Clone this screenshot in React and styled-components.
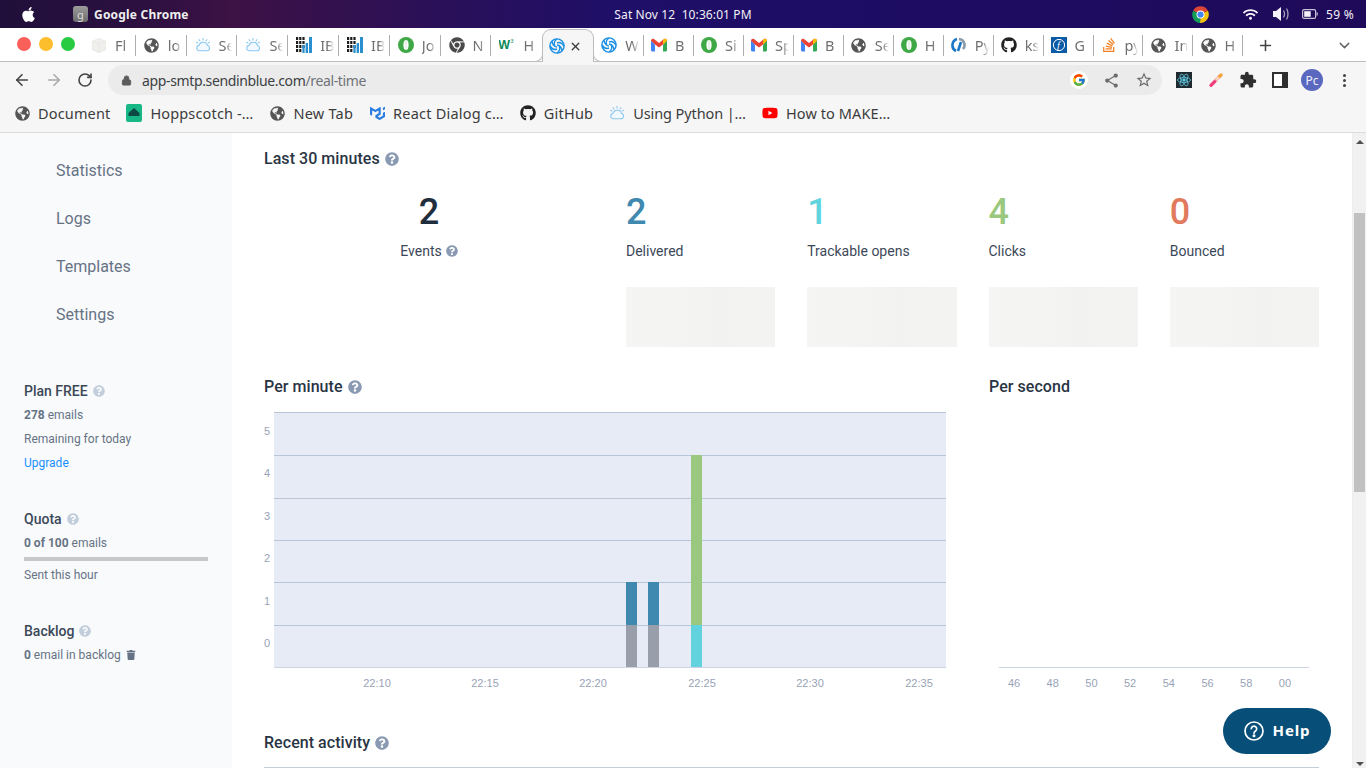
import React from 'react';
import styled, { createGlobalStyle } from 'styled-components';
import { FaApple, FaGlobeAmericas, FaGithub, FaChrome, FaStackOverflow, FaYoutube, FaWifi, FaTrash, FaQuestionCircle } from 'react-icons/fa';
import { FcGoogle } from 'react-icons/fc';
import { SiMui } from 'react-icons/si';
import { MdExtension, MdShare, MdStarBorder } from 'react-icons/md';
import { ArrowLeft, ArrowRight, RotateCw, Lock, Plus, ChevronDown, X } from 'lucide-react';

const Global = createGlobalStyle`
  html, body { margin: 0; padding: 0; height: 100%; overflow: hidden; background: #fff; }
  * { box-sizing: border-box; }
  body { font-family: Roboto, "Liberation Sans", sans-serif; }
`;
const UI = '"Noto Sans", "Open Sans", sans-serif';

const Screen = styled.div`
  position: relative; width: 1366px; height: 768px; display: flex; flex-direction: column; overflow: hidden;
`;
const Desktop = styled.div`
  height: 28px; flex: none; display: grid; grid-template-columns: 1fr auto 1fr; align-items: center;
  background: linear-gradient(90deg, #200f3a 0%, #2b1040 10%, #3d1245 17%, #2a1058 32%, #1f0f68 45%, #1d0c62 70%, #1e0a58 100%);
  color: #f2f0f6; font-family: ${UI}; font-size: 12px; letter-spacing: .1px;
`;
const DeskLeft = styled.div`display: flex; align-items: center; padding-left: 20px; font-weight: 700; font-size: 12px; color: #eee; letter-spacing: .2px;`;
const AppGlyph = styled.span`
  width: 15px; height: 16px; border-radius: 3px; background: linear-gradient(#9c9c9c,#6c6c6c); margin-left: 36px; margin-right: 6px;
  display: flex; align-items: center; justify-content: center; color: #ddd; font-size: 11px; font-weight: 400;
`;
const DeskRight = styled.div`display: flex; align-items: center; justify-content: flex-end; padding-right: 12px;`;
const Percent = styled.span`margin-left: 8px; font-size: 12px; letter-spacing: .3px;`;
const TrayGap = styled.span`display: flex; margin-left: ${p => p.$m}px;`;

const TabStrip = styled.div`
  height: 34px; flex: none; background: #fff; border-bottom: 1px solid #bdbdbd; display: flex; align-items: stretch; position: relative;
`;
const Lights = styled.div`display: flex; align-items: center; gap: 8px; width: 85px; padding-left: 17px; flex: none; margin-top: -2px;`;
const Light = styled.span`width: 14px; height: 14px; border-radius: 50%; background: ${p => p.$c};`;
const Tab = styled.div`
  width: ${p => p.$w}px; flex: none; display: flex; align-items: center; position: relative; padding-left: ${p => p.$pl}px; gap: 8px; margin-top: 1px;
  font-family: ${UI}; font-size: 14.5px; color: #707070;
  &::after { content: ''; position: absolute; right: 0; top: 6px; height: 21px; width: 1px; background: ${p => p.$noSep ? 'transparent' : '#aeaeae'}; }
`;
const ActiveTab = styled.div`
  width: 52px; flex: none; display: flex; align-items: center; position: relative; padding-left: 6px; gap: 4px;
  margin-top: 1px; margin-bottom: -1px; background: #f6f6f6; border: 1px solid #bdbdbd; border-bottom: 0; border-radius: 9px 9px 0 0;
  &::before, &::after { content: ''; position: absolute; bottom: 0; width: 8px; height: 8px; background: #fff; }
  &::before { left: -9px; border-right: 1px solid #bdbdbd; border-bottom: 1px solid #bdbdbd; border-bottom-right-radius: 8px; }
  &::after { right: -9px; border-left: 1px solid #bdbdbd; border-bottom: 1px solid #bdbdbd; border-bottom-left-radius: 8px; }
`;
const TabLabel = styled.span`
  flex: 1; min-width: 0; overflow: hidden; white-space: nowrap; margin-right: 5px;
  -webkit-mask-image: linear-gradient(90deg, #000 55%, transparent 100%); mask-image: linear-gradient(90deg, #000 55%, transparent 100%);
`;
const IconBox = styled.span`width: 16px; height: 16px; flex: none; display: flex; align-items: center; justify-content: center;`;
const TabTail = styled.div`display: flex; align-items: center; flex: 1; position: relative; margin-top: 1px;`;
const PlusBtn = styled.span`display: flex; margin-left: 14px; color: #444;`;
const ChevBtn = styled.span`display: flex; position: absolute; left: 93px; color: #666;`;

const Toolbar = styled.div`height: 36px; flex: none; background: #f6f6f6; display: flex; align-items: center; padding-left: 13px;`;
const NavBtn = styled.span`width: 32px; display: flex; color: ${p => p.$c || '#444'};`;
const Omnibox = styled.div`
  width: 1054px; height: 30px; margin-left: -1px; border-radius: 15px; background: #ebebeb; display: flex; align-items: center; padding-left: 13px;
  font-family: ${UI}; font-size: 14px; position: relative;
`;
const Url = styled.span`color: #3c4043; margin-left: 10px; letter-spacing: -.36px;`;
const UrlPath = styled.span`color: #6f7377;`;
const OmniIcons = styled.div`position: absolute; right: 9px; display: flex; align-items: center; gap: 15px; color: #6c6c6c;`;
const GoogleDot = styled.span`width: 18px; height: 18px; border-radius: 50%; background: #fff; display: flex; align-items: center; justify-content: center;`;
const ExtRow = styled.div`display: flex; align-items: center; margin-left: 6px;`;
const ExtSlot = styled.span`width: 32px; display: flex; justify-content: center; align-items: center; color: #2f2f2f;`;
const Avatar = styled.span`
  width: 22px; height: 22px; border-radius: 50%; background: #5a68bf; color: #f0f0fa; display: flex; align-items: center; justify-content: center;
  font-family: ${UI}; font-size: 12px;
`;
const Kebab = styled.span`
  width: 3px; height: 3px; border-radius: 50%; background: #444; box-shadow: 0 -5px 0 #444, 0 5px 0 #444;
`;

const Bookmarks = styled.div`
  height: 35px; flex: none; background: #f6f6f6; border-bottom: 1px solid #dcdcdc; display: flex; align-items: center; padding: 0 0 4px 14px; gap: 16px;
  font-family: ${UI}; font-size: 14.5px; color: #3c3c3c;
`;
const Mark = styled.div`display: flex; align-items: center; gap: 8px; white-space: nowrap; color: #3c3c3c; letter-spacing: ${p => p.$ls}px;`;

const Body = styled.div`flex: 1; min-height: 0; display: flex; overflow: hidden; position: relative;`;
const Sidebar = styled.aside`width: 232px; flex: none; background: #f9fafc; padding-top: 13px;`;
const NavItem = styled.div`height: 48px; display: flex; align-items: center; padding-left: 56px; font-size: 16px; color: #667385;`;
const SideGroup = styled.div`padding-left: 24px; margin-top: ${p => p.$m}px;`;
const SideTitle = styled.div`font-size: 14px; font-weight: 500; color: #3c4858; line-height: 24px; display: flex; align-items: center; gap: 5px;`;
const SideLine = styled.div`font-size: 12px; color: ${p => p.$c || '#667385'}; line-height: 24px; display: flex; align-items: center; gap: 5px;`;
const SideStrong = styled.b`font-weight: 700;`;
const Progress = styled.div`width: 184px; height: 4px; background: #c6c8ca; margin-top: 2px; margin-bottom: 2px;`;

const Main = styled.main`flex: 1; min-width: 0; padding: 14px 33px 0 32px; position: relative;`;
const Heading = styled.h2`
  margin: ${p => p.$m || 0}px 0 0; font-size: 16px; font-weight: 500; line-height: 24px; color: #2a3544; display: flex; align-items: center; gap: 5px; letter-spacing: .05px;
`;
const StatsGrid = styled.div`display: grid; grid-template-columns: 330px repeat(4, 149.25px); column-gap: 32px; margin-top: 21px;`;
const Stat = styled.div`display: flex; flex-direction: column; align-items: ${p => p.$center ? 'center' : 'flex-start'};`;
const StatValue = styled.div`font-size: 36px; font-weight: 500; line-height: 40px; color: ${p => p.$c};`;
const StatLabel = styled.div`font-size: 14px; line-height: 20px; color: #3c4858; margin-top: 9px; display: flex; align-items: center; gap: 4px;`;
const Spark = styled.div`
  width: 100%; height: 60px; margin-top: 26px;
  background: linear-gradient(90deg, #f5f5f3, #f4f4f3 30%, #f2f2f1 60%, #f3f3f2);
`;
const ChartRow = styled.div`display: flex; margin-top: 28px;`;
const ChartCol = styled.div`width: ${p => p.$w}px; margin-right: ${p => p.$mr || 0}px; flex: none;`;
const ChartSvg = styled.svg`display: block; margin-top: 6px;`;
const TableTop = styled.div`height: 1px; background: #c5cdd8; margin-top: 12px;`;

const Scrollbar = styled.div`width: 14px; flex: none; background: #f1f1f1; position: relative; border-left: 1px solid #ededed;`;
const Thumb = styled.div`position: absolute; left: 1px; right: 1px; top: 80px; height: 279px; background: #c1c1c1;`;
const ScrollArrow = styled.div`
  position: absolute; left: 3px; width: 0; height: 0; border-left: 4px solid transparent; border-right: 4px solid transparent;
  ${p => p.$up ? 'top: 7px; border-bottom: 4px solid #505050;' : 'bottom: 2px; border-top: 4px solid #505050;'}
`;
const HelpBtn = styled.button`
  position: absolute; left: 1223px; top: 708px; width: 108px; height: 46px; border: 0; border-radius: 23px; background: #074e78; color: #fff;
  display: flex; align-items: center; justify-content: center; gap: 9px; font-family: ${UI}; font-weight: 700; font-size: 15px; letter-spacing: .9px; padding: 0;
`;
const HelpText = styled.span`margin-top: -2px;`;

const Hint = ({ size = 14, c = '#8a9ab2' }) => <FaQuestionCircle size={size} color={c} />;

const Cloud = () => (
  <svg width="18" height="16" viewBox="0 0 18 16" fill="none" stroke="#8cc8f0" strokeWidth="1.2">
    <path d="M4.500 14.500h9a3 3 0 0 0 .6-5.900 5 5 0 0 0-9.600-.2 3.100 3.100 0 0 0 0 6.100z" fill="#f3faff" />
    <path d="M9 .5v2M4.600 2l1 1.600M13.400 2l-1 1.600M1.800 5l1.500.8M16.200 5l-1.500.8" strokeLinecap="round" />
  </svg>
);
const Ibm = () => (
  <svg width="16" height="16" viewBox="0 0 16 16">
    {[0, 1, 2, 3].flatMap(r => [0, 1, 2].map(c => (r + c < 5 ? <rect key={`${r}${c}`} x={c * 3.2} y={r * 4} width="2.200" height="3" fill="#1c1c1c" /> : null)))}
    <rect x="9.600" y="6" width="2.400" height="10" fill="#2a8fcf" />
    <rect x="13" y="0" width="3" height="16" fill="#2a8fcf" />
    <rect x="6.400" y="8" width="2.200" height="8" fill="#2a8fcf" />
  </svg>
);
const Mongo = () => (
  <svg width="16" height="16" viewBox="0 0 16 16">
    <circle cx="8" cy="8" r="8" fill="#3fa846" />
    <ellipse cx="8" cy="8" rx="2.600" ry="5" fill="#fff" />
    <path d="M8 3v10" stroke="#bfe3c0" strokeWidth=".8" />
  </svg>
);
const Swirl = () => (
  <svg width="16" height="16" viewBox="0 0 16 16" fill="none" stroke="#1a8fe3" strokeWidth="1.400">
    <circle cx="8" cy="8" r="7.100" />
    <path d="M8 1C5 3 4.500 6 6 8M15 8c-2-3-5-4-7-3M13 13c0-3-2-6-5-6M8 15c3-2 3.500-5 2-7M1 8c2 3 5 4 7 3M3 3c0 3 2 6 5 6" />
  </svg>
);
const Gmail = () => (
  <svg width="16" height="14" viewBox="0 0 16 13">
    <path d="M0 2v9.800C0 12.500.5 13 1.200 13H4V6z" fill="#4285f4" />
    <path d="M16 2v9.800c0 .7-.5 1.200-1.200 1.200H12V6z" fill="#34a853" />
    <path d="M0 2.200C0 .6 1.800-.4 3 .6L8 4.400 13 .6c1.200-1 3 0 3 1.600L12 6 8 9 4 6z" fill="#ea4335" />
    <path d="M12 1.400 13 .6c1.200-1 3 0 3 1.600L12 6z" fill="#fbbc04" />
  </svg>
);
const W3 = () => (
  <svg width="18" height="16" viewBox="0 0 18 16">
    <text x="-1" y="13" fontFamily="Liberation Sans" fontWeight="700" fontSize="14" fill="#0f8a58">W</text>
    <text x="13" y="6" fontFamily="Liberation Sans" fontSize="6" fill="#0f8a58">3</text>
  </svg>
);
const Ring = () => (
  <svg width="16" height="16" viewBox="0 0 16 16" fill="none" strokeWidth="2.600">
    <path d="M5 14A6.500 6.500 0 0 1 6 2" stroke="#1c78c6" />
    <path d="M8 2A6 6 0 0 1 12 12" stroke="#8a9aa8" />
    <path d="M10 5 7 14" stroke="#1c78c6" />
  </svg>
);
const FBox = () => (
  <svg width="16" height="16" viewBox="0 0 16 16">
    <rect width="16" height="16" fill="#0b5aa5" />
    <circle cx="8" cy="8" r="5.600" fill="none" stroke="#fff" />
    <text x="6" y="11.500" fontFamily="Liberation Serif" fontStyle="italic" fontSize="10" fill="#fff">f</text>
  </svg>
);
const Box = () => (
  <svg width="17" height="17" viewBox="0 0 17 17" fill="#f0efed" stroke="#e6e5e2" strokeWidth=".8">
    <path d="M8.500 1 15.500 4v9l-7 3.200L1.500 13V4z" />
    <path d="M1.500 4l7 3 7-3M8.500 7v9" fill="none" />
  </svg>
);
const Hopp = () => (
  <svg width="16" height="18" viewBox="0 0 16 18">
    <rect width="16" height="18" rx="2" fill="#17b886" />
    <path d="M2.500 9 8 4l5.500 5v3h-11z" fill="#0c4a46" />
  </svg>
);
const ChromeColor = () => (
  <svg width="17" height="17" viewBox="0 0 17 17">
    <path d="M8.500 8.500 1.100 4.700A8.400 8.400 0 0 1 15.900 4.700z" fill="#db4437" />
    <path d="M8.500 8.500 15.900 4.700A8.400 8.400 0 0 1 8 16.900z" fill="#f4c20d" />
    <path d="M8.500 8.500 8 16.900A8.400 8.400 0 0 1 1.100 4.700z" fill="#0f9d58" />
    <circle cx="8.500" cy="8.500" r="4" fill="#fff" />
    <circle cx="8.500" cy="8.500" r="3.100" fill="#4285f4" />
  </svg>
);
const Volume = () => (
  <svg width="16" height="14" viewBox="0 0 16 14" fill="#f4f2f8">
    <path d="M0 4h3l5-4v14l-5-4H0z" />
    <path d="M10.500 3.500c1.200 2 1.200 5 0 7M13.500 1.500c2 3 2 8 0 11" fill="none" stroke="#a8a4bc" strokeWidth="1.300" />
  </svg>
);
const Battery = () => (
  <svg width="16" height="10" viewBox="0 0 16 10">
    <rect x=".6" y=".6" width="13" height="8.800" rx="1.500" fill="none" stroke="#c8c4d6" strokeWidth="1.200" />
    <rect x="2.200" y="2.200" width="6.500" height="5.600" fill="#f4f2f8" />
    <rect x="14.500" y="3.500" width="1.200" height="3" fill="#c8c4d6" />
  </svg>
);
const ReactExt = () => (
  <svg width="16" height="16" viewBox="0 0 16 16" fill="none" stroke="#5fc6e0" strokeWidth=".8">
    <rect width="16" height="16" fill="#1f2a30" stroke="none" />
    <ellipse cx="8" cy="8" rx="6.500" ry="2.600" />
    <ellipse cx="8" cy="8" rx="6.500" ry="2.600" transform="rotate(60 8 8)" />
    <ellipse cx="8" cy="8" rx="6.500" ry="2.600" transform="rotate(120 8 8)" />
    <circle cx="8" cy="8" r="1.300" fill="#5fc6e0" />
  </svg>
);
const Dropper = () => (
  <svg width="16" height="16" viewBox="0 0 16 16" fill="none" strokeLinecap="round">
    <path d="M10.500 5.500 3 13" stroke="#f06a8a" strokeWidth="3" />
    <path d="M7 9.500 3 13.500" stroke="#ef3e7a" strokeWidth="3" />
    <path d="M11.500 4.500 13 3" stroke="#f3a340" strokeWidth="3.500" />
    <path d="M8.500 7.500 10 6" stroke="#f7d6b8" strokeWidth="2.500" />
  </svg>
);
const SidePanel = () => (
  <svg width="16" height="16" viewBox="0 0 16 16">
    <path d="M1 1h14v14H1z" fill="#fff" stroke="#2f2f2f" strokeWidth="2" />
    <rect x="10" y="1" width="5" height="14" fill="#2f2f2f" />
  </svg>
);
const HelpCircle = () => (
  <svg width="20" height="20" viewBox="0 0 20 20" fill="none" stroke="#fff" strokeWidth="1.700">
    <circle cx="10" cy="10" r="9" />
    <path d="M7.300 7.700a2.700 2.700 0 1 1 4.200 2.300c-1 .7-1.500 1.100-1.500 2.200" strokeLinecap="round" />
    <circle cx="10" cy="14.800" r=".7" fill="#fff" />
  </svg>
);

const Globe = () => <FaGlobeAmericas size={15} color="#555" />;
const tabs = [
  [<Box />, 'Fl'], [<Globe />, 'lo'], [<Cloud />, 'Se'], [<Cloud />, 'Se'], [<Ibm />, 'IB'], [<Ibm />, 'IB'],
  [<Mongo />, 'Jo'], [<FaChrome size={16} color="#4a4a4a" />, 'N'], [<W3 />, 'H'],
];
const tabsAfter = [
  [<Swirl />, 'W'], [<Gmail />, 'B'], [<Mongo />, 'Si'], [<Gmail />, 'Sp'], [<Gmail />, 'B'], [<Globe />, 'Se'],
  [<Mongo />, 'H'], [<Ring />, 'Py'], [<FaGithub size={16} color="#222" />, 'ks'], [<FBox />, 'G'],
  [<FaStackOverflow size={16} color="#f48024" />, 'py'], [<Globe />, 'In'], [<Globe />, 'H'],
];
const marks = [
  [<Globe />, 'Document', .15], [<Hopp />, 'Hoppscotch -…', .15], [<Globe />, 'New Tab', .22], [<SiMui size={15} color="#2a7de1" />, 'React Dialog c…', .22],
  [<FaGithub size={16} color="#222" />, 'GitHub', .22], [<Cloud />, 'Using Python |…', -.1], [<FaYoutube size={16} color="#f00" />, 'How to MAKE…', .1],
];
const stats = [
  ['2', 'Delivered', '#3f88b0'], ['1', 'Trackable opens', '#5fd3de'], ['4', 'Clicks', '#9ac87e'], ['0', 'Bounced', '#e27a5e'],
];

const gridY = [7, 50, 93, 135, 177, 220];
const yLabels = [[5, 26], [4, 68], [3, 111], [2, 153], [1, 196], [0, 238]];
const xLabels = [['22:10', 113], ['22:15', 221], ['22:20', 329], ['22:25', 438], ['22:30', 546], ['22:35', 655]];
const bars = [
  [362, 177, 43, '#3f88b0'], [362, 220, 42, '#989fab'], [384, 177, 43, '#3f88b0'], [384, 220, 42, '#989fab'],
  [427, 50, 170, '#9ac87e'], [427, 220, 42, '#62d2de'],
];
const secLabels = ['46', '48', '50', '52', '54', '56', '58', '00'];

const PerMinute = () => (
  <ChartSvg width="682" height="290" viewBox="0 0 682 290">
    <rect x="10" y="7" width="672" height="255" fill="#e6ebf5" />
    {gridY.map(y => <rect key={y} x="10" y={y} width="672" height="1" fill="#b9c6d8" />)}
    {bars.map(([x, y, h, c], i) => <rect key={i} x={x} y={y} width="11" height={h} fill={c} />)}
    <rect x="10" y="262" width="672" height="1" fill="#cdd5e3" />
    {yLabels.map(([t, y]) => <text key={t} x="3" y={y + 4} textAnchor="middle" fontFamily="Liberation Sans" fontSize="11" fill="#98a3b7">{t}</text>)}
    {xLabels.map(([t, x]) => <text key={t} x={x} y="282" textAnchor="middle" fontFamily="Liberation Sans" fontSize="11" fill="#98a3b7">{t}</text>)}
  </ChartSvg>
);
const PerSecond = () => (
  <ChartSvg width="331" height="290" viewBox="0 0 331 290">
    <rect x="10" y="262" width="310" height="1" fill="#cdd5e3" />
    {secLabels.map((t, i) => <text key={t} x={25 + i * 38.7} y="282" textAnchor="middle" fontFamily="Liberation Sans" fontSize="11" fill="#98a3b7">{t}</text>)}
  </ChartSvg>
);

export default function App() {
  return (
    <Screen>
      <Global />
      <Desktop>
        <DeskLeft>
          <FaApple size={17} color="#fff" />
          <AppGlyph>g</AppGlyph>
          Google Chrome
        </DeskLeft>
        <span>Sat Nov 12&nbsp;&nbsp;10:36:01 PM</span>
        <DeskRight>
          <ChromeColor />
          <TrayGap $m={34}><FaWifi size={15} color="#f4f2f8" /></TrayGap>
          <TrayGap $m={15}><Volume /></TrayGap>
          <TrayGap $m={13}><Battery /></TrayGap>
          <Percent>59 %</Percent>
        </DeskRight>
      </Desktop>

      <TabStrip>
        <Lights>
          <Light $c="#f9605a" /><Light $c="#fdbe2e" /><Light $c="#28cb42" />
        </Lights>
        {tabs.map(([icon, t], i) => (
          <Tab key={i} $w={50.8} $pl={i === 0 ? 6 : 8} $noSep={i === 8}><IconBox>{icon}</IconBox><TabLabel>{t}</TabLabel></Tab>
        ))}
        <ActiveTab><IconBox><Swirl /></IconBox><X size={13} color="#3c3c3c" strokeWidth={2.5} /></ActiveTab>
        {tabsAfter.map(([icon, t], i) => (
          <Tab key={i} $w={49.95} $pl={7}><IconBox>{icon}</IconBox><TabLabel>{t}</TabLabel></Tab>
        ))}
        <TabTail>
          <PlusBtn><Plus size={17} strokeWidth={2.2} /></PlusBtn>
          <ChevBtn><ChevronDown size={17} /></ChevBtn>
        </TabTail>
      </TabStrip>

      <Toolbar>
        <NavBtn><ArrowLeft size={18} strokeWidth={2.2} /></NavBtn>
        <NavBtn $c="#a9a9a9"><ArrowRight size={18} strokeWidth={2.2} /></NavBtn>
        <NavBtn><RotateCw size={16} strokeWidth={2.4} /></NavBtn>
        <Omnibox>
          <Lock size={11} color="#5c5c5c" fill="#5c5c5c" />
          <Url>app-smtp.sendinblue.com<UrlPath>/real-time</UrlPath></Url>
          <OmniIcons>
            <GoogleDot><FcGoogle size={14} /></GoogleDot>
            <MdShare size={17} />
            <MdStarBorder size={18} />
          </OmniIcons>
        </Omnibox>
        <ExtRow>
          <ExtSlot><ReactExt /></ExtSlot>
          <ExtSlot><Dropper /></ExtSlot>
          <ExtSlot><MdExtension size={18} /></ExtSlot>
          <ExtSlot><SidePanel /></ExtSlot>
          <ExtSlot><Avatar>Pc</Avatar></ExtSlot>
          <ExtSlot><Kebab /></ExtSlot>
        </ExtRow>
      </Toolbar>

      <Bookmarks>
        {marks.map(([icon, t, ls]) => <Mark key={t} $ls={ls}><IconBox>{icon}</IconBox>{t}</Mark>)}
      </Bookmarks>

      <Body>
        <Sidebar>
          <NavItem>Statistics</NavItem>
          <NavItem>Logs</NavItem>
          <NavItem>Templates</NavItem>
          <NavItem>Settings</NavItem>
          <SideGroup $m={41}>
            <SideTitle>Plan FREE <Hint size={12} c="#c3cedd" /></SideTitle>
            <SideLine><span><SideStrong>278</SideStrong> emails</span></SideLine>
            <SideLine>Remaining for today</SideLine>
            <SideLine $c="#1a90ff">Upgrade</SideLine>
          </SideGroup>
          <SideGroup $m={32}>
            <SideTitle>Quota <Hint size={12} c="#c3cedd" /></SideTitle>
            <SideLine><span><SideStrong>0 of 100</SideStrong> emails</span></SideLine>
            <Progress />
            <SideLine>Sent this hour</SideLine>
          </SideGroup>
          <SideGroup $m={32}>
            <SideTitle>Backlog <Hint size={12} c="#c3cedd" /></SideTitle>
            <SideLine><span><SideStrong>0</SideStrong> email in backlog</span> <FaTrash size={10} color="#667385" /></SideLine>
          </SideGroup>
        </Sidebar>

        <Main>
          <Heading>Last 30 minutes <Hint /></Heading>
          <StatsGrid>
            <Stat $center>
              <StatValue $c="#1f2d3d">2</StatValue>
              <StatLabel>Events <Hint size={12} /></StatLabel>
            </Stat>
            {stats.map(([v, l, c]) => (
              <Stat key={l}>
                <StatValue $c={c}>{v}</StatValue>
                <StatLabel>{l}</StatLabel>
                <Spark />
              </Stat>
            ))}
          </StatsGrid>
          <ChartRow>
            <ChartCol $w={682} $mr={43}>
              <Heading>Per minute <Hint /></Heading>
              <PerMinute />
            </ChartCol>
            <ChartCol $w={331}>
              <Heading>Per second</Heading>
              <PerSecond />
            </ChartCol>
          </ChartRow>
          <Heading $m={36}>Recent activity <Hint /></Heading>
          <TableTop />
        </Main>

        <Scrollbar>
          <ScrollArrow $up />
          <Thumb />
          <ScrollArrow />
        </Scrollbar>
      </Body>

      <HelpBtn><HelpCircle /><HelpText>Help</HelpText></HelpBtn>
    </Screen>
  );
}
